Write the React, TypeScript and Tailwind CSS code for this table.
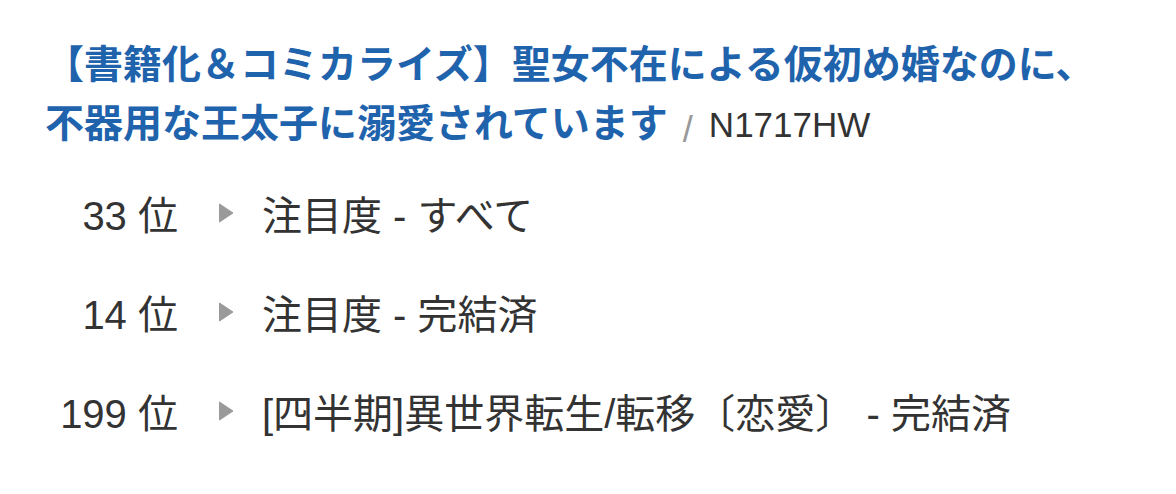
import React from 'react';

type Rank = { rank: number; label: string };

const ranks: Rank[] = [
  { rank: 33, label: '注目度 - すべて' },
  { rank: 14, label: '注目度 - 完結済' },
  { rank: 199, label: '[四半期]異世界転生/転移〔恋愛〕 - 完結済' },
];

const font = { fontFamily: '"Liberation Sans", "Noto Sans CJK JP", sans-serif' };

export default function App() {
  return (
    <div className="w-[1176px] h-[494px] bg-white overflow-hidden" style={font}>
      <div className="pl-[45px] pt-[35px] w-[1115px]">
        <p className="text-[39px] leading-[59px]">
          <a href="#" className="font-bold text-[#1f63ad]">
            【書籍化＆コミカライズ】聖女不在による仮初め婚なのに、不器用な王太子に溺愛されています
          </a>
          <span className="text-[#999] text-[36px] font-light ml-[15px] mr-[16px] align-[-5px]">/</span>
          <span className="text-[#333] text-[35px]">N1717HW</span>
        </p>
      </div>

      <ul className="mt-[28px] pl-[45px] flex flex-col gap-[40px]">
        {ranks.map(r => (
          <li key={r.rank} className="flex items-center h-[59px] text-[40px] leading-[59px] text-[#333]">
            <span className="w-[133px] text-right whitespace-nowrap">{r.rank} 位</span>
            <svg width="16" height="20" viewBox="0 0 16 20" className="ml-[40px] mr-[28px] -mt-[8px] shrink-0">
              <path d="M1.5 1 L15 10 L1.5 19 Z" fill="#9a9a9a" stroke="#9a9a9a" strokeWidth="1" strokeLinejoin="round" />
            </svg>
            <span className="whitespace-nowrap">{r.label}</span>
          </li>
        ))}
      </ul>
    </div>
  );
}
